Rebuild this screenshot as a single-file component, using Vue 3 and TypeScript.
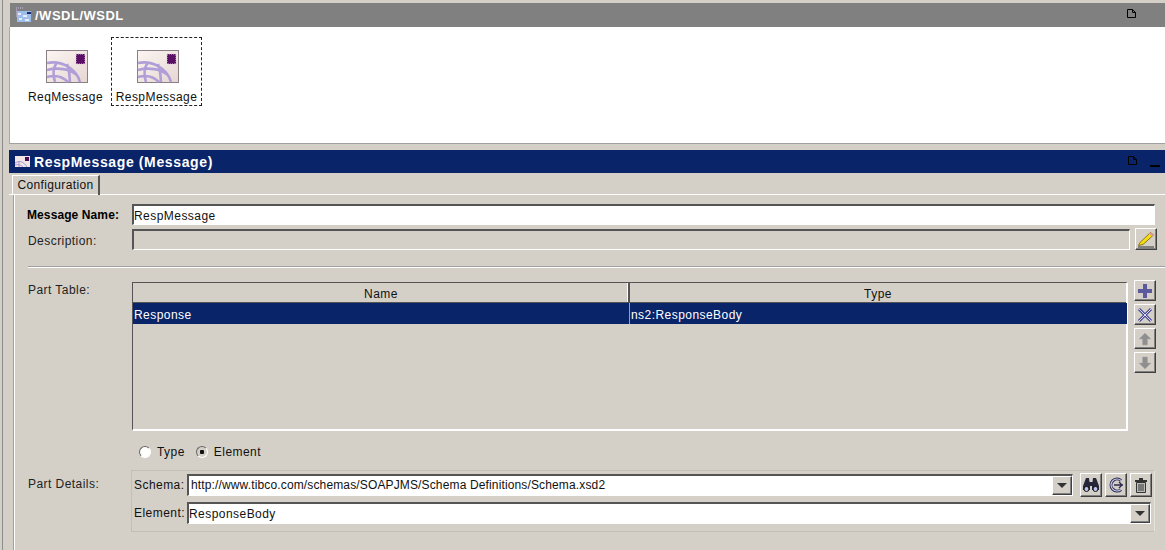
<script setup lang="ts">
const items = [
  { name: 'ReqMessage', selected: false },
  { name: 'RespMessage', selected: true },
]
const columns = ['Name', 'Type']
</script>

<template>
  <div class="window">
    <div class="rail"></div>
    <div class="main">
      <section class="browser">
        <header class="titlebar gray">
          <svg class="title-icon" width="17" height="16" viewBox="0 0 17 16">
            <rect x="2" y="4" width="14" height="11" fill="#9dbdea" />
            <path d="M3 6h3v2H3zM8 8h4v2H8zM4 11h3v2H4zM10 12h4v2h-4z" fill="#e4edf9" />
            <path d="M1 1h1M3 1h1M5 1h1M7 1h1M1 3h1M1 5h1M1 7h1M1 9h1" stroke="#cdbce4" stroke-width="1" />
            <rect x="12" y="5" width="4" height="2" fill="#1b2a6b" />
          </svg>
          <span class="title-text">/WSDL/WSDL</span>
          <svg class="doc" width="11" height="11" viewBox="0 0 11 11"><path d="M1.500 1.500h5l3 3v5h-8z M6.500 1.500v3h3" fill="none" stroke="#000" /></svg>
        </header>
        <div class="canvas">
          <div v-for="item in items" :key="item.name" class="item" :class="{ selected: item.selected }">
            <svg class="msg-icon" width="43" height="34" viewBox="0 0 43 34">
              <defs>
                <linearGradient id="msgbg" x1="0" y1="0" x2="1" y2="1">
                  <stop offset="0" stop-color="#fbf5f1" />
                  <stop offset="1" stop-color="#e6d6d2" />
                </linearGradient>
              </defs>
              <rect x="0.500" y="0.500" width="41" height="32" fill="url(#msgbg)" stroke="#8b7f86" />
              <path d="M1 13C15 10 30 18 34 32M1 20C12 17 24 19 31 25M1 27C8 25 16 26 22 32M11 12C7 18 7 26 9 32M21 14C23 20 24 27 24 32" fill="none" stroke="#b09ed8" stroke-width="2.600" />
              <rect x="30" y="4" width="9" height="10" fill="#5a0f64" stroke="#d8c5dc" stroke-dasharray="1 1" />
            </svg>
            <span class="item-label">{{ item.name }}</span>
          </div>
        </div>
      </section>

      <section class="editor">
        <header class="titlebar blue">
          <svg class="title-icon2" width="15" height="11" viewBox="0 0 15 11">
            <rect width="15" height="11" fill="#f1e6e6" />
            <path d="M0 7C5 4 9 6 12 11M0 9C3 8 6 9 8 11M4 5V11" fill="none" stroke="#a898cc" />
            <rect x="10" y="1" width="4" height="4" fill="#4a0a56" />
          </svg>
          <span class="title-text big">RespMessage (Message)</span>
          <svg class="doc dim" width="11" height="11" viewBox="0 0 11 11"><path d="M1.500 1.500h5l3 3v5h-8z M6.500 1.500v3h3" fill="none" stroke="#000" /></svg>
          <span class="minimize"></span>
        </header>
        <div class="tabs"><div class="tab">Configuration</div></div>
        <div class="tab-body">
          <div class="row name-row">
            <label class="label strong">Message Name:</label>
            <div class="field name-field">RespMessage</div>
          </div>
          <div class="row desc-row">
            <label class="label desc-label">Description:</label>
            <div class="field disabled"></div>
            <button class="btn square pencil-btn">
              <svg width="18" height="18" viewBox="0 0 18 18">
                <path d="M1.500 15.500L3 12.500 13.500 2.500 16.500 5 6 14.500Z" fill="#f7dc10" stroke="#5e5200" stroke-width=".7" />
                <path d="M13.500 2.500L16.500 5 15 6.300 12 3.800Z" fill="#e89a9a" />
                <path d="M1 17H17" stroke="#333" />
              </svg>
            </button>
          </div>
          <div class="divider"></div>
          <div class="row table-row">
            <label class="label table-label">Part Table:</label>
            <div class="table">
              <div class="thead">
                <div v-for="c in columns" :key="c" class="th">{{ c }}</div>
              </div>
              <div class="tr">
                <div class="td">Response</div>
                <div class="td">ns2:ResponseBody</div>
              </div>
            </div>
            <div class="side-btns">
              <button class="btn square">
                <svg width="16" height="16" viewBox="0 0 16 16"><path d="M6 1h4v5h5v4h-5v5H6v-5H1V6h5z" fill="#5a5a9c" /></svg>
              </button>
              <button class="btn square">
                <svg width="16" height="16" viewBox="0 0 16 16"><path d="M2 2l12 12M14 2L2 14" stroke="#4a4a98" stroke-width="3" /><path d="M2 2l12 12M14 2L2 14" stroke="#d9d9f0" stroke-width="1" /></svg>
              </button>
              <button class="btn square">
                <svg width="16" height="16" viewBox="0 0 16 16"><path d="M8 2l6 6h-3.500v6h-5V8H2z" fill="#8f8f8f" stroke="#aaa" stroke-width=".5" /></svg>
              </button>
              <button class="btn square">
                <svg width="16" height="16" viewBox="0 0 16 16"><path d="M8 14l6-6h-3.500V2h-5v6H2z" fill="#8f8f8f" stroke="#aaa" stroke-width=".5" /></svg>
              </button>
            </div>
          </div>
          <div class="radios">
            <span class="radio-opt"><span class="radio"></span>Type</span>
            <span class="radio-opt"><span class="radio on"></span>Element</span>
          </div>
          <div class="row details-row">
            <label class="label details-label">Part Details:</label>
            <div class="details">
              <div class="detail-line">
                <span class="sub-label">Schema:</span>
                <div class="field combo">
                  <span class="combo-text">http://www.tibco.com/schemas/SOAPJMS/Schema Definitions/Schema.xsd2</span>
                  <span class="btn arrow"><i></i></span>
                </div>
                <div class="tool-btns">
                  <button class="btn tool">
                    <svg width="18" height="18" viewBox="0 0 18 18">
                      <path d="M4 2h3l1 8v4H1v-4zM11 2h3l3 8v4h-7v-4z" fill="#26263a" />
                      <rect x="7" y="6" width="4" height="4" fill="#26263a" />
                      <circle cx="4.500" cy="13" r="2.500" fill="#b9c4ec" stroke="#111" />
                      <circle cx="13.500" cy="13" r="2.500" fill="#b9c4ec" stroke="#111" />
                    </svg>
                  </button>
                  <button class="btn tool">
                    <svg width="18" height="18" viewBox="0 0 18 18">
                      <path d="M14 4.500A6 6 0 1 0 14 13.500" fill="none" stroke="#2c2c50" stroke-width="3" />
                      <path d="M14 4.500A6 6 0 1 0 14 13.500" fill="none" stroke="#c7c9ee" stroke-width="1.200" />
                      <path d="M7 9h9M12 6l3 3-3 3" fill="none" stroke="#2c2c50" stroke-width="1.300" />
                    </svg>
                  </button>
                  <button class="btn tool">
                    <svg width="18" height="18" viewBox="0 0 18 18">
                      <path d="M7 2h4v2H7zM3 4h12v2H3z" fill="#333" />
                      <path d="M4.500 6.500h9v10h-9z" fill="#bcbcbc" stroke="#333" />
                      <path d="M7 8v7M9 8v7M11 8v7" stroke="#333" />
                    </svg>
                  </button>
                </div>
              </div>
              <div class="detail-line second">
                <span class="sub-label">Element:</span>
                <div class="field combo">
                  <span class="combo-text">ResponseBody</span>
                  <span class="btn arrow"><i></i></span>
                </div>
              </div>
            </div>
          </div>
        </div>
      </section>
    </div>
  </div>
</template>

<style>
html, body { margin: 0; background: #d4d0c8; overflow: hidden; }
</style>

<style scoped>
.window {
  width: 1165px;
  height: 550px;
  display: flex;
  background: #d4d0c8;
  font-family: "Liberation Sans", Arial, sans-serif;
  font-size: 12px;
  letter-spacing: 0.45px;
  color: #111;
  overflow: hidden;
}
.rail {
  width: 7px;
  margin-left: 2px;
  border-left: 1px solid #8c8c8c;
  box-sizing: border-box;
  flex: none;
}
.main { flex: 1; min-width: 0; padding-top: 3px; }
.titlebar { display: flex; align-items: center; box-sizing: border-box; color: #fff; font-weight: bold; }
.gray { height: 24px; background: #808080; margin-left: 1px; padding-left: 5px; }
.blue { height: 23px; background: #0a246a; padding-left: 6px; }
.title-icon { margin-right: 3px; }
.title-icon2 { margin-right: 4px; }
.title-text { font-size: 13px; letter-spacing: 0.5px; }
.title-text.big { font-size: 14px; letter-spacing: 0.63px; }
.doc { margin-left: auto; margin-right: 28px; margin-top: -3px; }
.doc.dim { margin-right: 0; }
.minimize { width: 10px; height: 2px; background: #000; margin: 8px 5px 0 12px; }
.canvas {
  margin-left: 0;
  background: #fff;
  border-left: 1px solid #a8a8a8;
  border-bottom: 1px solid #a0a0a0;
  padding: 10px 0 0 10px;
  display: flex;
  height: 106px;
}
.item {
  width: 91px;
  height: 69px;
  box-sizing: border-box;
  border: 1px dashed transparent;
  display: flex;
  flex-direction: column;
  align-items: center;
  padding-top: 12px;
}
.item.selected { border-color: #222; }
.msg-icon { margin-left: 3px; flex: none; }
.item-label { margin-top: 6px; line-height: 14px; white-space: nowrap; }
.editor { margin-top: 6px; }
.tabs { height: 22px; padding: 2px 0 0 3px; box-sizing: border-box; border-bottom: 1px solid #fff; }
.tab {
  width: 88px;
  height: 20px;
  box-sizing: border-box;
  border-top: 1px solid #fff;
  border-left: 1px solid #fff;
  border-right: 2px solid #555;
  text-align: center;
  line-height: 18px;
  letter-spacing: 0.35px;
}
.tab-body {
  margin-left: 5px;
  border-left: 1px solid #fff;
  box-shadow: -1px 0 0 #a0a0a0;
  padding-top: 9px;
  height: 360px;
}
.row { display: flex; }
.name-row, .desc-row { height: 21px; }
.label { width: 117px; height: 21px; padding-left: 13px; box-sizing: border-box; flex: none; line-height: 21px; color: #222; }
.strong { padding-left: 12px; font-weight: bold; letter-spacing: 0.1px; color: #000; line-height: 22px; }
.desc-label { line-height: 24px; }
.field {
  box-sizing: border-box;
  border: 1px solid #fff;
  border-top: 2px solid #555;
  border-left: 2px solid #555;
  background: #fff;
  height: 21px;
  line-height: 21px;
  padding-left: 0;
  white-space: nowrap;
}
.name-field { width: 1023px; }
.desc-row { margin-top: 4px; }
.disabled { width: 998px; background: #d4d0c8; }
.btn {
  box-sizing: border-box;
  border: 1px solid;
  border-color: #fff #404040 #404040 #fff;
  border-radius: 0;
  background: #d4d0c8;
  padding: 0;
  box-shadow: inset -1px -1px 0 #808080;
  display: flex;
  align-items: center;
  justify-content: center;
}
.square { width: 22px; height: 21px; }
.pencil-btn { margin: -1px 0 0 5px; height: 22px; }
.divider { margin: 16px 0 0 13px; border-top: 1px solid #a0a0a0; border-bottom: 1px solid #fff; }
.table-row { margin-top: 14px; }
.table-label { margin-top: -2px; }
.table {
  width: 996px;
  height: 149px;
  box-sizing: border-box;
  border: 2px solid #fff;
  border-top: 1px solid #555;
  border-left: 1px solid #555;
  flex: none;
}
.thead { display: flex; height: 20px; border-bottom: 1px solid #555; box-sizing: border-box; }
.th { text-align: center; line-height: 23px; border-right: 2px solid #555; box-sizing: border-box; box-shadow: inset -1px 0 0 #fff; }
.th:first-child { width: 497px; padding-left: 1px; }
.th:last-child { flex: 1; border-right: 0; box-shadow: none; }
.tr { display: flex; background: #0a246a; color: #fff; height: 21px; margin-right: -1px; line-height: 24px; }
.td:first-child { width: 497px; padding-left: 1px; box-sizing: border-box; border-right: 1px solid #8aa; }
.td:last-child { padding-left: 1px; }
.side-btns { display: flex; flex-direction: column; gap: 3px; margin: -2px 0 0 6px; }
.radios { display: flex; gap: 11px; margin: 13px 0 0 124px; height: 16px; align-items: center; }
.radio-opt { display: inline-flex; align-items: center; gap: 6px; }
.radio {
  width: 12px;
  height: 12px;
  box-sizing: border-box;
  border-radius: 50%;
  border: 1px solid;
  border-color: #666 #fff #fff #666;
  background: #fff;
  display: inline-block;
}
.radio.on { background: radial-gradient(circle, #111 0 2px, #d4d0c8 2.500px); }
.details-row { margin-top: 10px; }
.details-label { line-height: 24px; margin-top: 2px; }
.details {
  width: 1024px;
  height: 62px;
  box-sizing: border-box;
  margin-left: -1px;
  border: 1px solid #c2bfb7;
  border-right-color: #e6e3dc;
  padding: 2px 0 0 2px;
}
.detail-line { display: flex; align-items: center; height: 24px; }
.detail-line.second { margin-top: 5px; height: 22px; }
.sub-label { width: 53px; flex: none; }
.combo { display: flex; height: 22px; flex: 1; padding-left: 2px; padding-right: 0; align-items: flex-start; }
.combo-text { flex: 1; line-height: 19px; letter-spacing: 0.14px; }
.second .combo { margin-right: 2px; flex: none; width: 964px; padding-left: 0; }
.second .combo-text { letter-spacing: 0.45px; line-height: 21px; }
.arrow { width: 20px; height: 19px; flex: none; }
.arrow i { width: 0; height: 0; border: 5px solid transparent; border-top: 5px solid #333; border-bottom: 0; }
.tool-btns { display: flex; gap: 3px; margin: 0 2px 0 7px; }
.tool { width: 22px; height: 24px; }
</style>
